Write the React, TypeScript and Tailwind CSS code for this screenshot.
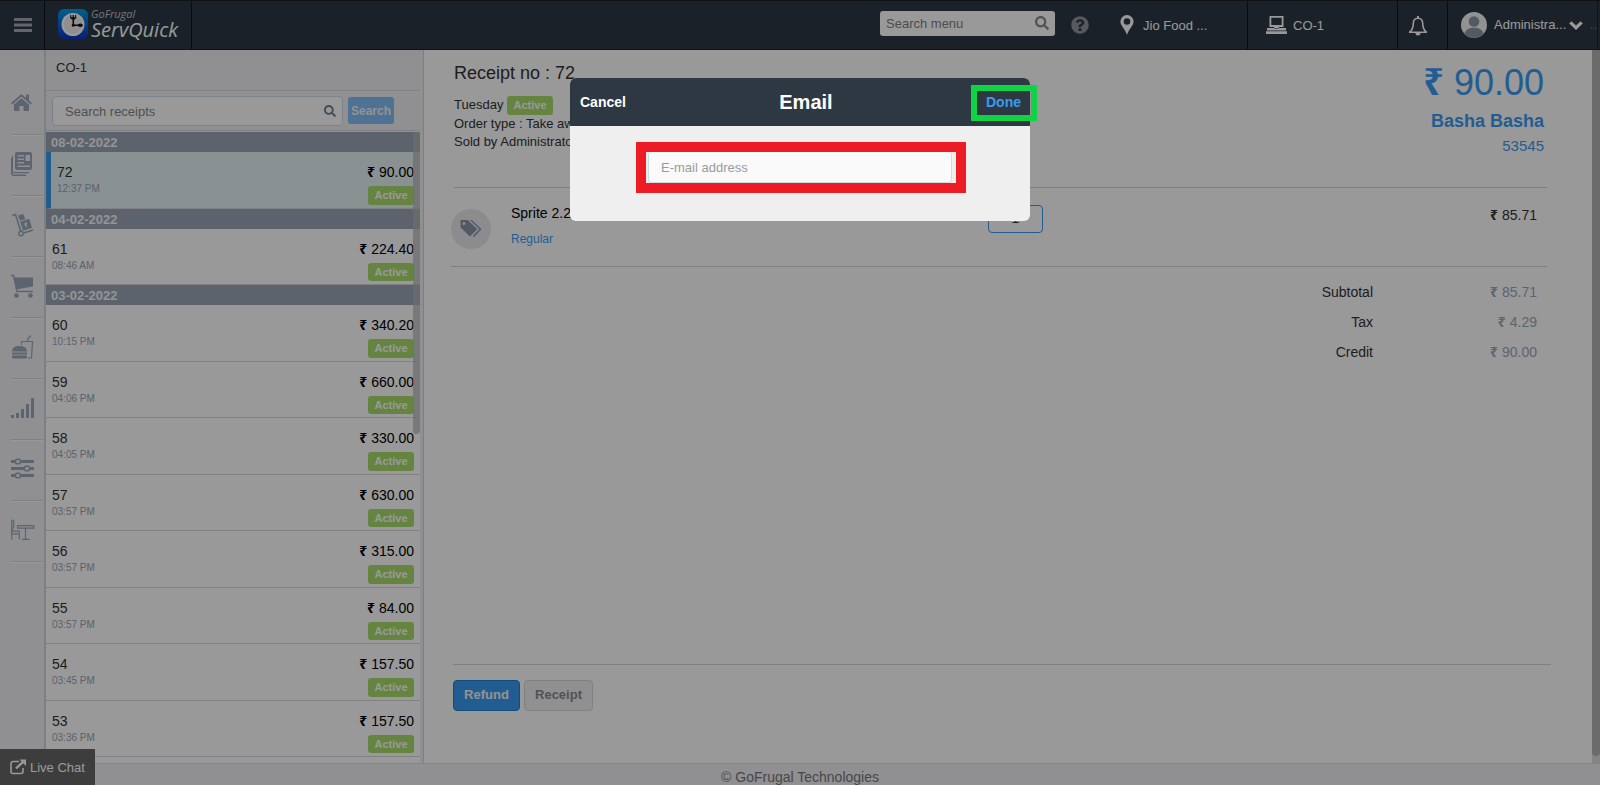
import type { ReactNode } from "react";
import { FaQuestionCircle, FaSearch } from "react-icons/fa";

type Receipt = { no: string; time: string; amount: string; selected?: boolean };

const groups: { date: string; receipts: Receipt[] }[] = [
  { date: "08-02-2022", receipts: [{ no: "72", time: "12:37 PM", amount: "90.00", selected: true }] },
  { date: "04-02-2022", receipts: [{ no: "61", time: "08:46 AM", amount: "224.40" }] },
  {
    date: "03-02-2022",
    receipts: [
      { no: "60", time: "10:15 PM", amount: "340.20" },
      { no: "59", time: "04:06 PM", amount: "660.00" },
      { no: "58", time: "04:05 PM", amount: "330.00" },
      { no: "57", time: "03:57 PM", amount: "630.00" },
      { no: "56", time: "03:57 PM", amount: "315.00" },
      { no: "55", time: "03:57 PM", amount: "84.00" },
      { no: "54", time: "03:45 PM", amount: "157.50" },
      { no: "53", time: "03:36 PM", amount: "157.50" },
    ],
  },
];

const totals = [
  { label: "Subtotal", value: "85.71" },
  { label: "Tax", value: "4.29" },
  { label: "Credit", value: "90.00" },
];

function Money({ value }: { value: string }) {
  return (
    <span className="whitespace-nowrap">
      <span className="font-['Noto_Sans',sans-serif] font-bold leading-none">₹</span> {value}
    </span>
  );
}

function ActiveBadge() {
  return (
    <span className="inline-block w-[46px] rounded-[3px] bg-[#a9dc6c] py-px text-center text-[11px] font-bold leading-normal text-white">
      Active
    </span>
  );
}

function Icon({ children }: { children: ReactNode }) {
  return (
    <svg viewBox="0 0 24 24" className="size-6" fill="currentColor" aria-hidden="true">
      {children}
    </svg>
  );
}

const navItems: { label: string; icon: ReactNode }[] = [
  {
    label: "Home",
    icon: (
      <Icon>
        <path d="M10.5 3 0 12l1.3 1.5 9.2-7.9 9.2 7.9L21 12l-3-2.6V3.6h-3V7z" />
        <path d="M10.5 7.2 3 13.6V20h5.5v-5h4v5H18v-6.4z" />
      </Icon>
    ),
  },
  {
    label: "Receipts",
    icon: (
      <Icon>
        <path
          fillRule="evenodd"
          d="M6 0h13a2 2 0 0 1 2 2v14a2 2 0 0 1-2 2H6a2 2 0 0 1-2-2V2a2 2 0 0 1 2-2zm.5 3v1.5H13V3zm0 3.500V8H13V6.500zm0 3.500v1.500H13V10zM14.500 3v6H19V3zM6.500 13.500V15H19v-1.500z"
        />
        <path d="M2 3v15.500A1.500 1.500 0 0 0 3.500 20H18v1.200H3.500A2.700 2.700 0 0 1 .9 18.500V4.500z" />
        <path d="M0 6v15a3 3 0 0 0 3 3h12v-1.400H3.300A2 2 0 0 1 1.400 20.500V6z" />
      </Icon>
    ),
  },
  {
    label: "Purchase",
    icon: (
      <Icon>
        <path d="M1 2.500 4.500 1.500 10 19" fill="none" stroke="currentColor" strokeWidth="1.600" />
        <circle cx="10" cy="20.500" r="2.200" fill="none" stroke="currentColor" strokeWidth="1.400" />
        <path d="m12.500 20 9.500-3" stroke="currentColor" strokeWidth="1.600" />
        <path d="m7 2.500 5-1.700L14.300 6 9 7.700z" />
        <path fillRule="evenodd" d="m9.200 8.700 9-2.900 2.800 9-9 2.900zM14.500 9l-1.700 3 1.200-.3.800 2.500 1.400-.4-.8-2.500 1.200-.4z" />
      </Icon>
    ),
  },
  {
    label: "Sales",
    icon: (
      <Icon>
        <path d="M0 1.500h2.500L6 17.500h16" fill="none" stroke="currentColor" strokeWidth="1.500" />
        <path d="M3 3.500h19v9L5 15.500z" />
        <circle cx="5.500" cy="21.500" r="2.300" />
        <circle cx="19.500" cy="21.500" r="2.300" />
      </Icon>
    ),
  },
  {
    label: "Menu items",
    icon: (
      <Icon>
        <path d="M1 16.500c0-4 3-5.500 7.500-5.500s7.500 1.500 7.500 5.500z" />
        <path d="M1 17.500h15v2H1zM1 20.500h15v1.500a1.500 1.500 0 0 1-1.500 1.500h-12A1.500 1.500 0 0 1 1 22z" />
        <path d="M10.500 10V6.500h11l-1 16.500H17M16.500 6.500 17 3.500 20 .5" fill="none" stroke="currentColor" strokeWidth="1.200" />
      </Icon>
    ),
  },
  {
    label: "Reports",
    icon: (
      <Icon>
        <path d="M0 19h3v3H0zM5 17h3v5H5zM10 13h3v9h-3zM15 8h3v14h-3zM20 2h3v20h-3z" />
      </Icon>
    ),
  },
  {
    label: "Settings",
    icon: (
      <Icon>
        <path d="M0 3h4v3H0zM10 3h13v3H10zM0 10h13v3H0zM19 10h4v3h-4zM0 17h4v3H0zM10 17h13v3H10z" />
        <g fill="none" stroke="currentColor" strokeWidth="1.500">
          <rect x="4.700" y="2.200" width="4.600" height="4.600" rx="1" />
          <rect x="13.700" y="9.200" width="4.600" height="4.600" rx="1" />
          <rect x="4.700" y="16.200" width="4.600" height="4.600" rx="1" />
        </g>
      </Icon>
    ),
  },
  {
    label: "Tables",
    icon: (
      <Icon>
        <g fill="none" stroke="currentColor" strokeWidth="1.200">
          <path d="M.7 21.500v-18c0-2 2-1.500 2 0V8L.9 12.500M.7 13.200h7.600v8.300M.7 15.800h7.600" />
          <path d="M6.600 7.600h16.300v2.600H6.600zM14.500 10.200v11M11 21.300h7.500" />
        </g>
      </Icon>
    ),
  },
];

function LogoMark() {
  return (
    <svg viewBox="0 0 30 30" className="size-[30px]" aria-hidden="true">
      <defs>
        <linearGradient id="mark" x1="0" y1="0" x2="0" y2="1">
          <stop offset="0" stopColor="#00a0e8" />
          <stop offset="1" stopColor="#1432c8" />
        </linearGradient>
      </defs>
      <rect width="30" height="30" rx="6" fill="url(#mark)" />
      <circle cx="15" cy="15.500" r="11.500" fill="#fff" />
      <circle cx="15" cy="15.500" r="8.500" fill="#f1f1f1" stroke="#ddd" strokeWidth="0.600" />
      <path d="M15.300 9v7.300h6" fill="none" stroke="#111" strokeWidth="1.600" />
      <path d="M12.200 6h1v2.300h1.400V6h1.200v2.300h1.400V6h1v3l-1.600 1.600h-2.800L12.200 9z" fill="#111" />
      <ellipse cx="22.300" cy="16.300" rx="2.600" ry="1.800" fill="#111" />
      <circle cx="15.300" cy="16.300" r="1.500" fill="#111" />
    </svg>
  );
}

function Header() {
  return (
    <header className="flex h-[50px] shrink-0 border-y border-[#191f26] bg-[#2d3843] text-[13px] text-white">
      <button type="button" aria-label="Toggle menu" className="flex w-[45px] items-center border-r border-[#10151a] pl-3.5">
        <svg viewBox="0 0 18 14" className="h-3.5 w-[18px] text-[#a4abb4]" fill="currentColor" aria-hidden="true">
          <path d="M0 0h18v3H0zM0 5.500h18v3H0zM0 11h18v3H0z" />
        </svg>
      </button>
      <a href="#home" className="flex w-[147px] items-center gap-[3px] border-r border-[#10151a] pb-0.5 pl-[13px] font-['Open_Sans',sans-serif] italic">
        <LogoMark />
        <span className="flex flex-col">
          <span className="text-[11px] leading-3 text-[#c3c7cb]">GoFrugal</span>
          <span className="text-[20px] leading-5">ServQuick</span>
        </span>
      </a>

      <div className="ml-auto flex">
        <div className="flex items-center pb-1">
          <label className="flex h-[25px] w-[175px] items-center rounded-[3px] bg-white px-1.5">
            <span className="sr-only">Search menu</span>
            <input type="text" placeholder="Search menu" className="h-full min-w-0 flex-1 bg-transparent text-black outline-none placeholder:text-[#808080]" />
            <FaSearch className="size-3.5 text-[#8a8a8a]" />
          </label>
        </div>
        <button type="button" aria-label="Help" className="flex w-[50px] items-center justify-center">
          <FaQuestionCircle className="size-[18px] text-[#8f979f]" />
        </button>
        <a href="#location" className="flex w-[143px] items-center gap-[9px] border-r border-[#10151a] pl-[15px]">
          <svg viewBox="0 0 14 20" className="h-5 w-3.5" fill="currentColor" aria-hidden="true">
            <path fillRule="evenodd" d="M7 0a6.600 6.600 0 0 1 6.600 6.600C13.600 10.500 9 14 7 20 5 14 .4 10.500.4 6.600A6.600 6.600 0 0 1 7 0zm0 3.200a3.300 3.300 0 1 0 0 6.600 3.300 3.300 0 0 0 0-6.600z" />
          </svg>
          <span className="pt-0.5">Jio Food ...</span>
        </a>
        <a href="#counter" className="flex w-[150px] items-center gap-1.5 border-r border-[#10151a] pl-[18px]">
          <svg viewBox="0 0 21 18" className="h-[18px] w-[21px]" fill="currentColor" aria-hidden="true">
            <path fillRule="evenodd" d="M3.500 0h14v11h-14zm1.800 1.700v7.400h10.400V1.700zM8 11h5v1.500H8zM1 12h19v2.500H1zM0 15.200h21V18H0z" />
          </svg>
          <span className="pt-0.5">CO-1</span>
        </a>
        <button type="button" aria-label="Notifications" className="flex w-[50px] items-center border-r border-[#10151a] pl-2.5">
          <svg viewBox="0 0 20 20" className="mt-0.5 size-5" aria-hidden="true">
            <path d="M10 2.300c-3.200 0-4.700 2.200-4.700 5.200 0 4.500-1.300 6.700-3.700 8.700h16.800c-2.400-2-3.700-4.200-3.700-8.700 0-3-1.500-5.200-4.700-5.200z" fill="none" stroke="currentColor" strokeWidth="1.600" strokeLinejoin="round" />
            <path d="M9 0h2v2.500H9zM7.500 17h5a2.500 2.500 0 0 1-5 0z" fill="currentColor" />
          </svg>
        </button>
        <button type="button" className="flex w-[150px] items-center border-r border-[#191f26] pl-[13px]">
          <svg viewBox="0 0 26 26" className="mr-[7px] size-[26px]" aria-hidden="true">
            <circle cx="13" cy="13" r="13" fill="#f3f3f5" />
            <circle cx="13" cy="9.500" r="5.300" fill="#8b97a2" />
            <path d="M3.500 21.800a13 13 0 0 0 19 0C21.500 17.500 18 15.800 13 15.800s-8.500 1.700-9.500 6z" fill="#8b97a2" />
          </svg>
          <span>Administra...</span>
          <svg viewBox="0 0 14 9" className="ml-[3px] h-[9px] w-3.5" fill="none" stroke="currentColor" strokeWidth="3.200" aria-hidden="true">
            <path d="M1.300 1.300 7 6.700l5.700-5.400" />
          </svg>
          <span className="ml-auto text-[#76838f]">..</span>
        </button>
        <span className="w-0.5" />
      </div>
    </header>
  );
}

function Sidebar() {
  return (
    <nav className="flex w-[46px] shrink-0 flex-col border-r-2 border-[#cbd5dc] bg-[#f0f0f3] pt-6 text-[#99a7b9]">
      {navItems.map((item) => (
        <a key={item.label} href="#nav" aria-label={item.label} className="ml-[11px] mr-px block h-[61px] border-b border-[#d6d6db] pt-[17px] shadow-[0_1px_0_#fff]">
          {item.icon}
        </a>
      ))}
    </nav>
  );
}

function ReceiptRow({ receipt }: { receipt: Receipt }) {
  return (
    <li
      className={
        "flex justify-between border-b border-[#d8d8dc] px-1.5 pb-[3px] pt-2.5 " +
        (receipt.selected ? "border-l-[5px] border-l-[#3a9bf0] bg-[#e6f2f5]" : "bg-white")
      }
    >
      <div className="flex flex-col">
        <span className="text-[14px] leading-5 text-[#333]">{receipt.no}</span>
        <span className="text-[10px] leading-[14px] text-[#99a2b5]">{receipt.time}</span>
      </div>
      <div className="flex flex-col items-end gap-1">
        <span className="text-[14px] leading-5 text-black">
          <Money value={receipt.amount} />
        </span>
        <ActiveBadge />
      </div>
    </li>
  );
}

function ReceiptPanel() {
  return (
    <section className="flex w-[378px] shrink-0 flex-col border-r border-[#d3d3d8] bg-[#f0f0f3] pr-[3px]">
      <h2 className="h-[41px] shrink-0 border-b border-[#d6d9de] pl-2.5 pt-2 text-[13px] leading-5 text-[#333]">CO-1</h2>
      <div className="flex h-10 shrink-0 items-center gap-[5px] border-b border-[#d6d9de] pl-1.5">
        <label className="flex h-[30px] w-[291px] items-center rounded border border-[#ccdbe4] bg-white px-1.5">
          <span className="sr-only">Search receipts</span>
          <input type="text" placeholder="Search receipts" className="h-full min-w-0 flex-1 bg-transparent pl-1.5 pt-0.5 text-[13px] outline-none placeholder:text-[#858585]" />
          <FaSearch className="size-3 text-[#6f7f96]" />
        </label>
        <button type="button" className="h-[27px] w-[46px] rounded-[3px] bg-[#83bff5] text-[12px] font-bold text-[#f4f4f4]">
          Search
        </button>
      </div>
      <div className="relative mt-px min-h-0 flex-1 overflow-hidden">
        {groups.map((group) => (
          <div key={group.date}>
            <h3 className="h-5 bg-[#9aa6b6] pl-[5px] pt-px text-[13px] font-bold leading-5 text-[#f7f7f7]">{group.date}</h3>
            <ul>
              {group.receipts.map((receipt) => (
                <ReceiptRow key={receipt.no} receipt={receipt} />
              ))}
            </ul>
          </div>
        ))}
        <div className="h-2 bg-white" />
        <div className="absolute right-0 top-0 h-[302px] w-[7px] rounded-b bg-[#b4b4b4]/70" />
      </div>
    </section>
  );
}

function ReceiptDetail() {
  return (
    <main className="flex min-w-0 flex-1 flex-col bg-white pl-[27px] pr-[45px] text-[#333]">
      <div className="ml-[3px] flex h-[138px] shrink-0 justify-between border-b border-[#d6d6d6] pt-[11px]">
        <div className="text-[13px] leading-[18px]">
          <h1 className="mb-[11px] text-[18px] leading-6">Receipt no : 72</h1>
          <p>
            Tuesday <ActiveBadge />
          </p>
          <p>Order type : Take away</p>
          <p>Sold by Administrator</p>
        </div>
        <div className="flex flex-col items-end pr-[3px] text-[#3a9bf4]">
          <span className="text-[36px] leading-[44px]">
            <Money value="90.00" />
          </span>
          <span className="mt-1 text-[18px] font-bold leading-6">Basha Basha</span>
          <span className="text-[15px] leading-[26px]">53545</span>
        </div>
      </div>

      <div className="flex h-[79px] shrink-0 border-b border-[#d6d6d6]">
        <span className="mt-[21px] flex size-10 shrink-0 items-center justify-center rounded-full bg-[#eaeaef] text-[#8795a8]">
          <svg viewBox="0 0 24 20" className="h-5 w-6" fill="currentColor" aria-hidden="true">
            <path fillRule="evenodd" d="M1.500 1h7.300l9.500 9.200-7.400 7.400L1.500 8.400zM5 3a1.500 1.500 0 1 0 0 3 1.500 1.500 0 0 0 0-3z" />
            <path d="M11 1h1.800L22.500 10.200 15 18l-1.200-1 6.600-6.800z" />
          </svg>
        </span>
        <div className="ml-5 flex w-[477px] flex-col pt-[15px]">
          <span className="text-[14px] leading-5 text-black">Sprite 2.25 L</span>
          <span className="mt-1.5 text-[12px] leading-5 text-[#3a9bf4]">Regular</span>
        </div>
        <span className="mt-[17px] flex h-7 w-[55px] justify-center rounded border border-[#3a9bf4] pt-0.5 text-[14px] leading-5">1</span>
        <span className="ml-auto pr-2.5 pt-[17px] text-[14px] leading-5">
          <Money value="85.71" />
        </span>
      </div>

      <dl className="mt-2.5 flex flex-col text-[14px] leading-[30px]">
        {totals.map((total) => (
          <div key={total.label} className="flex justify-end pr-2.5">
            <dt>{total.label}</dt>
            <dd className="w-[164px] text-right text-[#99a7b9]">
              <Money value={total.value} />
            </dd>
          </div>
        ))}
      </dl>

      <div className="-mr-1 ml-0.5 mt-auto flex h-[99px] items-start gap-1 border-t border-[#d6d6d6] pt-[15px] text-[13px] font-bold">
        <button type="button" className="h-[31px] w-[67px] rounded border border-[#1f7fd6] bg-[#3a9bf4] pb-0.5 text-[#f4f4f4]">
          Refund
        </button>
        <button type="button" className="h-[31px] w-[69px] rounded border border-[#d8d8dc] bg-[#f0f0f3] pb-0.5 text-[#888]">
          Receipt
        </button>
      </div>
    </main>
  );
}

function EmailDialog() {
  return (
    <div className="fixed inset-0 flex items-start justify-center bg-black/40 pt-[78px]">
      <form role="dialog" aria-label="Email" className="w-[460px] rounded-md bg-[#efefef] text-[14px] font-bold">
        <div className="relative flex h-12 items-center justify-between rounded-t-md bg-[#2d3843] pl-2.5 pr-[9px] text-white">
          <button type="button">Cancel</button>
          <h2 className="text-[20px] leading-6">Email</h2>
          <button type="submit" className="text-[#3a9bf0]">
            Done
          </button>
          <span className="pointer-events-none absolute -right-[7px] top-[7px] h-9 w-[66px] border-[6px] border-[#0fd344]" />
        </div>
        <div className="flex h-[95px] items-start justify-center pl-0.5 pt-4">
          <div className="h-[51px] w-[330px] border-[10px] border-[#ed1c24] bg-[#efefef] pl-0.5">
            <input
              type="email"
              aria-label="E-mail address"
              placeholder="E-mail address"
              className="block h-[31px] w-[304px] rounded border border-t-0 border-[#cfdbe4] bg-[#fafafa] px-3 text-[13px] font-normal outline-none placeholder:text-[#9b9b9b]"
            />
          </div>
        </div>
      </form>
    </div>
  );
}

export default function App() {
  return (
    <div className="flex h-screen flex-col overflow-hidden bg-white font-['Liberation_Sans',Arial,sans-serif]">
      <Header />
      <div className="flex min-h-0 flex-1">
        <Sidebar />
        <div className="flex min-w-0 flex-1 flex-col">
          <div className="flex min-h-0 flex-1">
            <ReceiptPanel />
            <ReceiptDetail />
            <div className="w-2 shrink-0 bg-[#dedede]">
              <div className="h-[99%] rounded-b bg-[#b2b2b2]" />
            </div>
          </div>
          <footer className="h-[22px] shrink-0 border-t border-[#dcdce0] bg-[#f0f0f3] pr-[46px] pt-[3px] text-center text-[14px] leading-5 text-[#777]">
            © GoFrugal Technologies
          </footer>
        </div>
      </div>
      <button type="button" className="fixed bottom-0 left-0 flex h-9 w-[95px] items-center gap-1 bg-[#666] pl-2.5 text-[13px] text-white">
        <svg viewBox="0 0 16 16" className="size-4 shrink-0" fill="none" stroke="currentColor" aria-hidden="true">
          <path d="M9 2.500H3A2 2 0 0 0 1 4.500v8a2 2 0 0 0 2 2h8a2 2 0 0 0 2-2V9" strokeWidth="1.600" />
          <path d="M6 9.500 13 2.800" strokeWidth="2.400" />
          <path d="M9.500.5H16V7z" fill="currentColor" stroke="none" />
        </svg>
        <span className="pt-0.5">Live Chat</span>
      </button>
      <EmailDialog />
    </div>
  );
}
